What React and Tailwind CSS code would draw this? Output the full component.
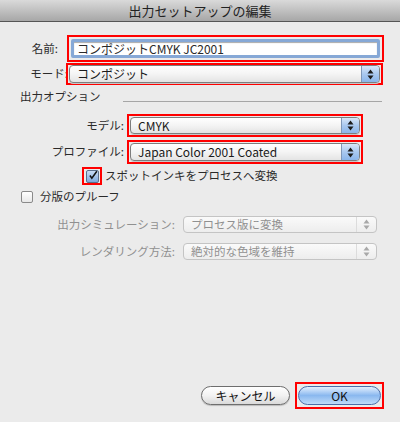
import React from 'react';

const FONT = { fontFamily: '"Noto Sans CJK JP", "DejaVu Sans", sans-serif' };

function Arrows({ disabled }) {
  const c = disabled ? '#a8a8a8' : '#1c1c1c';
  return (
    <svg width="7" height="11" viewBox="0 0 7 11">
      <path d="M3.5 0.5 L6.5 4.5 L0.5 4.5 Z" fill={c} />
      <path d="M0.5 6.5 L6.5 6.5 L3.5 10.5 Z" fill={c} />
    </svg>
  );
}

function Popup({ value, disabled, className = '' }) {
  if (disabled) {
    return (
      <div className={`flex items-stretch rounded-[4px] border border-[#c4c4c4] bg-gradient-to-b from-[#fafafa] to-[#ededed] ${className}`}>
        <div className="flex-1 flex items-center pl-[7px] text-[11.5px] text-[#909090]">{value}</div>
        <div className="w-[20px] flex items-center justify-center border-l border-[#dcdcdc]">
          <Arrows disabled />
        </div>
      </div>
    );
  }
  return (
    <div className={`flex items-stretch rounded-[4px] border border-[#7d7d7d] bg-gradient-to-b from-[#ffffff] via-[#f4f4f4] to-[#e4e4e4] shadow-[0_1px_0_#c8c8c8] overflow-hidden ${className}`}>
      <div className="flex-1 flex items-center pl-[7px] text-[12px] text-[#1a1a1a]">{value}</div>
      <div className="w-[18px] flex items-center justify-center border-l border-[#7f97b8] bg-gradient-to-b from-[#d9e7f8] via-[#a9c8ef] to-[#8bb5ea]">
        <Arrows />
      </div>
    </div>
  );
}

export default function App() {
  return (
    <div className="w-[400px] h-[422px] bg-[#ebebeb] flex flex-col text-[#2a2a2a] overflow-hidden" style={FONT}>
      {/* title bar */}
      <div className="h-[22px] flex items-center justify-center bg-gradient-to-b from-[#dadada] to-[#a7a7a7] border-b border-[#555] text-[13px] text-[#222]">
        出力セットアップの編集
      </div>

      <div className="pt-[13px]">
        {/* name */}
        <div className="flex items-center h-[27px]">
          <div className="w-[67px] pr-[9px] text-right text-[11.5px]">名前:</div>
          <div className="w-[317px] h-[27px] border-2 border-[#ff0000] p-[2px]">
            <div className="h-full rounded-[2px] border-[3px] border-[#86a8d6] bg-white flex items-center pl-[3px] text-[12px] shadow-[inset_0_1px_1px_#aaa]">
              コンポジットCMYK JC2001
            </div>
          </div>
        </div>

        {/* mode */}
        <div className="flex items-center h-[22px] mt-[1px]">
          <div className="w-[68px] text-right text-[11.5px] -mr-[2px]">モード:</div>
          <div className="w-[317px] h-[22px] border-2 border-[#ff0000] px-[1px]">
            <Popup value="コンポジット" className="h-[18px]" />
          </div>
        </div>

        {/* section header */}
        <div className="flex items-end h-[15px] mt-[4px]">
          <div className="pl-[20px] text-[11.5px] leading-[15px]">出力オプション</div>
          <div className="flex-1 ml-[22px] mr-[18px] mb-[2px] h-px bg-[#a6a6a6]" />
        </div>

        {/* model */}
        <div className="flex items-center h-[23px] mt-[10px]">
          <div className="w-[127px] pr-[3px] text-right text-[11.5px]">モデル:</div>
          <div className="w-[236px] h-[23px] border-2 border-[#ff0000] p-[1px]">
            <Popup value="CMYK" className="h-full" />
          </div>
        </div>

        {/* profile */}
        <div className="flex items-center h-[24px] mt-[3px]">
          <div className="w-[127px] pr-[3px] text-right text-[11.5px]">プロファイル:</div>
          <div className="w-[236px] h-[24px] border-2 border-[#ff0000] p-[1px]">
            <Popup value="Japan Color 2001 Coated" className="h-full" />
          </div>
        </div>

        {/* spot ink checkbox */}
        <div className="flex items-center h-[18px] mt-[3px]">
          <div className="ml-[82px] w-[20px] h-[18px] border-2 border-[#ff0000] flex items-center justify-center">
            <div className="w-[13px] h-[13px] rounded-[2px] border border-[#5a6f8c] bg-gradient-to-b from-[#c9dcf4] to-[#7fa8dc] flex items-center justify-center">
              <svg width="13" height="13" viewBox="0 0 13 13" className="-mt-[2px] ml-[1px]">
                <path d="M2.5 6.5 L5 10 L11.5 1" fill="none" stroke="#111" strokeWidth="2" />
              </svg>
            </div>
          </div>
          <div className="ml-[3px] text-[11.5px]">スポットインキをプロセスへ変換</div>
        </div>

        {/* proof checkbox */}
        <div className="flex items-center h-[14px] mt-[5px]">
          <div className="ml-[21px] w-[12px] h-[12px] rounded-[2px] border border-[#8a8a8a] bg-gradient-to-b from-[#ffffff] to-[#e8e8e8]" />
          <div className="ml-[7px] text-[11.5px]">分版のプルーフ</div>
        </div>

        {/* simulation */}
        <div className="flex items-center h-[17px] mt-[12px]">
          <div className="w-[183px] pr-[8px] text-right text-[11.5px] text-[#909090]">出力シミュレーション:</div>
          <Popup value="プロセス版に変換" disabled className="w-[194px] h-[17px]" />
        </div>

        {/* rendering */}
        <div className="flex items-center h-[17px] mt-[10px]">
          <div className="w-[183px] pr-[8px] text-right text-[11.5px] text-[#909090]">レンダリング方法:</div>
          <Popup value="絶対的な色域を維持" disabled className="w-[194px] h-[17px]" />
        </div>
      </div>

      {/* buttons */}
      <div className="mt-auto mb-[13px] flex items-center justify-end pr-[16px]">
        <button className="w-[89px] h-[19px] rounded-full border border-[#6e6e6e] bg-gradient-to-b from-[#ffffff] via-[#f2f2f2] to-[#dadada] text-[12px] text-[#111] flex items-center justify-center shadow-[0_1px_1px_#bbb]">
          キャンセル
        </button>
        <div className="ml-[5px] w-[89px] h-[27px] border-2 border-[#ff0000] px-[1px] py-[2px]">
          <button className="w-full h-full rounded-full border border-[#4a6ea8] bg-gradient-to-b from-[#e3effc] via-[#8ab8ef] to-[#c0dcf8] text-[12px] text-[#111] flex items-center justify-center">
            OK
          </button>
        </div>
      </div>
    </div>
  );
}
